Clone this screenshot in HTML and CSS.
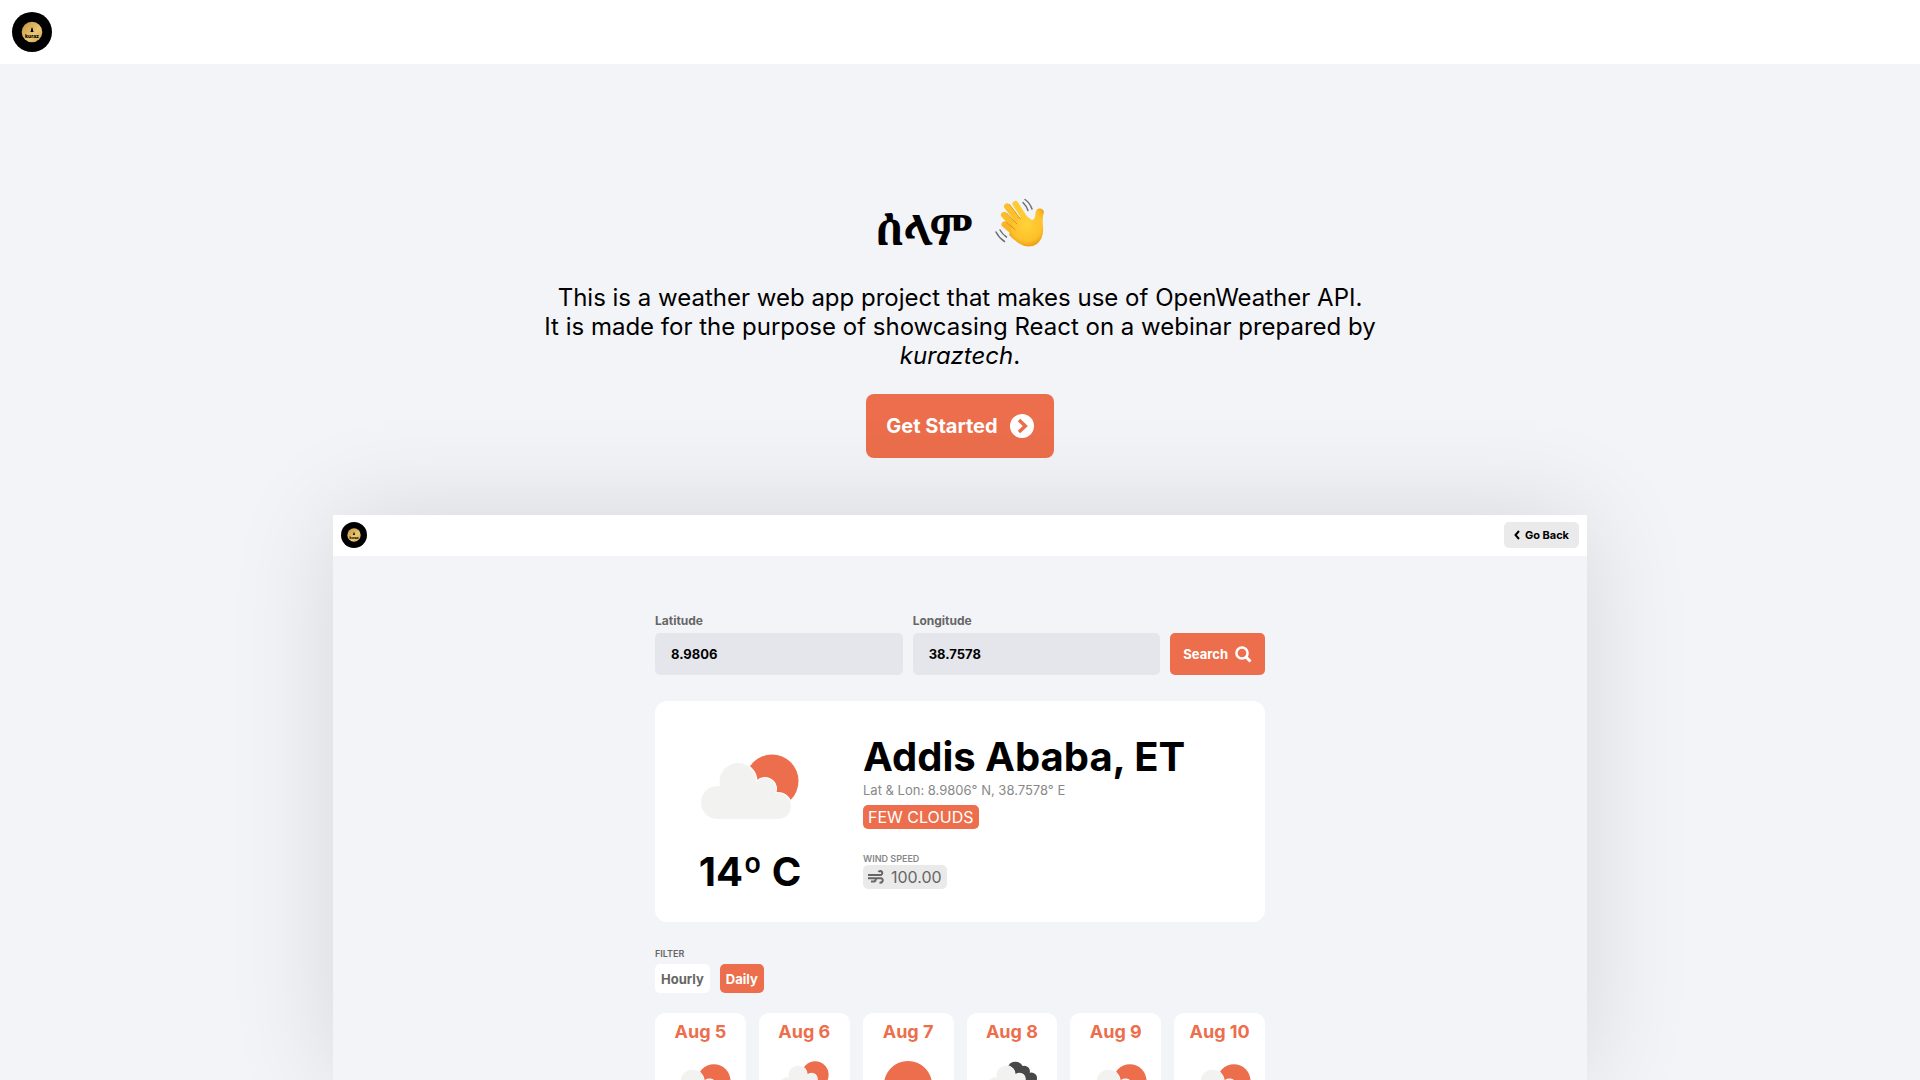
FILE: index.html
```html
<!DOCTYPE html>
<html lang="en">
<head>
<meta charset="utf-8">
<meta name="viewport" content="width=device-width, initial-scale=1">
<title>Kuraz Weather</title>
<link rel="stylesheet" href="styles.css">
</head>
<body>
<svg class="defs" aria-hidden="true">
  <defs>
    <linearGradient id="gold" x1="0" y1="0" x2="1" y2="1">
      <stop offset="0" stop-color="#c3923d"/>
      <stop offset=".6" stop-color="#e9c873"/>
      <stop offset="1" stop-color="#d0a04a"/>
    </linearGradient>
    <radialGradient id="skin" cx=".5" cy=".4" r=".65">
      <stop offset="0" stop-color="#ffd33c"/>
      <stop offset=".7" stop-color="#fdc02a"/>
      <stop offset="1" stop-color="#e8940f"/>
    </radialGradient>
    <symbol id="logo" viewBox="0 0 40 40">
      <circle cx="20" cy="20" r="20" fill="#000"/>
      <circle cx="20" cy="20" r="10.300" fill="url(#gold)"/>
      <path d="M20 15l1 2.500v1.500l1 1H18l1-1v-1.500z" fill="#000"/>
      <text x="20" y="25.500" text-anchor="middle" class="logo-word">kuraz</text>
    </symbol>
    <g id="cloud-shape">
      <circle cx="16.500" cy="48.500" r="16.500"/>
      <circle cx="37" cy="27.500" r="18.500"/>
      <circle cx="64" cy="35" r="11"/>
      <circle cx="77" cy="52" r="13"/>
      <path d="M16 40L37 30H56L70 40L77 50V65H16z"/>
    </g>
    <symbol id="few-clouds" viewBox="0 0 98 65">
      <circle cx="71" cy="27" r="26.500" fill="#ec6e4c"/>
      <use href="#cloud-shape" fill="#fff" stroke="#fff" stroke-width="2"/>
      <use href="#cloud-shape" fill="#f2f2f0"/>
    </symbol>
    <symbol id="broken-clouds" viewBox="0 0 98 65">
      <path d="M40 20A16 16 0 0 1 70 10A11 11 0 0 1 84 23A11 11 0 0 1 98 36Q98 55 84 55H50z" fill="#484848"/>
      <use href="#cloud-shape" fill="#fff" stroke="#fff" stroke-width="2"/>
      <use href="#cloud-shape" fill="#f2f2f0"/>
    </symbol>
  </defs>
</svg>

<header class="topbar">
  <a href="#" class="logo-link" aria-label="Kuraz home"><svg class="logo"><use href="#logo"/></svg></a>
</header>

<main class="hero">
  <h1 class="greeting"><span lang="am">ሰላም</span>
    <svg class="wave" viewBox="0 0 50 50" role="img" aria-label="Waving hand">
      <g fill="none" stroke-linecap="round">
        <path d="M12 8.500L27 28" stroke="#fcc02b" stroke-width="6"/>
        <path d="M20.500 6L34 27" stroke="#ffca32" stroke-width="6"/>
        <path d="M9 17L24 33" stroke="#fbbd28" stroke-width="6"/>
        <path d="M9.500 26.500L22 37" stroke="#f9b525" stroke-width="6"/>
      </g>
      <path d="M18 24L30 17L37 22Q40 22 40.500 15Q41 11 44 10.500Q48 10 49 14Q47 19 48 29Q49 40 42 46Q34 51 25 46Q20 43 14 37z" fill="url(#skin)"/>
      <g fill="none" stroke="#dd930f" stroke-width="1" stroke-linecap="round">
        <path d="M14.500 6.500L25.500 21"/><path d="M11.500 15L22 26"/><path d="M11 24L20 31.500"/>
      </g>
      <g fill="none" stroke="#6d7073" stroke-width="1.500" stroke-linecap="round">
        <path d="M30 1.500Q35 5 37 11"/><path d="M28 4.500Q31.500 8 33 12.500"/>
        <path d="M1 34Q4 40 9.500 43.500"/><path d="M5 32Q7.500 36.500 11.500 39"/>
      </g>
    </svg>
  </h1>
  <p class="intro">This is a weather web app project that makes use of OpenWeather API.<br>It is made for the purpose of showcasing React on a webinar prepared by <em>kuraztech</em>.</p>
  <button type="button" class="btn start">Get Started
    <svg class="start-icon" viewBox="0 0 24 24"><circle cx="12" cy="12" r="12" fill="#fff"/><path d="M9 6L15.300 12L9 18" fill="none" stroke="#ec6e4c" stroke-width="3.500"/></svg>
  </button>

  <section class="preview" aria-label="App preview">
    <header class="preview-bar">
      <a href="#" class="logo-link" aria-label="Kuraz home"><svg class="logo small"><use href="#logo"/></svg></a>
      <button type="button" class="back"><svg class="back-icon" viewBox="0 0 6 10"><path d="M5 1L1.500 5L5 9" fill="none" stroke="#000" stroke-width="2"/></svg>Go Back</button>
    </header>
    <div class="panel">
      <form class="search">
        <div class="field"><label for="lat">Latitude</label><input id="lat" type="text" value="8.9806"></div>
        <div class="field"><label for="lon">Longitude</label><input id="lon" type="text" value="38.7578"></div>
        <button type="button" class="btn find">Search
          <svg class="find-icon" viewBox="0 0 17 17"><circle cx="7" cy="7" r="5.600" fill="none" stroke="#fff" stroke-width="2.500"/><path d="M11 11L15.500 15.500" stroke="#fff" stroke-width="3"/></svg>
        </button>
      </form>

      <article class="current">
        <div class="reading">
          <svg class="sky"><use href="#few-clouds"/></svg>
          <p class="big">14º C</p>
        </div>
        <div class="place">
          <h2 class="big">Addis Ababa, ET</h2>
          <p class="coords">Lat &amp; Lon: 8.9806° N, 38.7578° E</p>
          <p class="chip status">FEW CLOUDS</p>
          <p class="caption">WIND SPEED</p>
          <p class="chip wind"><svg class="wind-icon" viewBox="0 0 17 14"><g fill="none" stroke="#666" stroke-width="2"><path d="M0 5H12.500A2 2 0 1 0 10.500 2"/><path d="M0 8.300H13.500A2.200 2.200 0 1 1 11.500 12.300"/><path d="M3 11.500H5.500A2 2 0 0 0 7.500 8.500"/></g></svg>100.00</p>
        </div>
      </article>

      <p class="caption dark">FILTER</p>
      <div class="filters">
        <button type="button" class="filter">Hourly</button>
        <button type="button" class="filter active">Daily</button>
      </div>

      <ul class="days">
        <li><h3>Aug 5</h3><svg class="day-icon large"><use href="#few-clouds"/></svg></li>
        <li><h3>Aug 6</h3><svg class="day-icon"><use href="#few-clouds"/></svg></li>
        <li><h3>Aug 7</h3><svg class="day-icon sun" viewBox="0 0 48 48"><circle cx="24" cy="24" r="24" fill="#ec6e4c"/></svg></li>
        <li><h3>Aug 8</h3><svg class="day-icon"><use href="#broken-clouds"/></svg></li>
        <li><h3>Aug 9</h3><svg class="day-icon large"><use href="#few-clouds"/></svg></li>
        <li><h3>Aug 10</h3><svg class="day-icon large"><use href="#few-clouds"/></svg></li>
      </ul>
    </div>
  </section>
</main>
</body>
</html>
```
FILE: styles.css
```css
* { box-sizing: border-box; }

body {
  margin: 0;
  height: 100vh;
  overflow: hidden;
  display: flex;
  flex-direction: column;
  background: #f3f4f8;
  color: #000;
  font-family: Inter, "Liberation Sans", sans-serif;
}

h1, h2, h3, p, ul { margin: 0; padding: 0; }
button, input { border: 0; font-family: inherit; }
svg { display: block; flex: none; }
.defs { position: absolute; width: 0; height: 0; }

.topbar {
  flex: none;
  height: 64px;
  padding: 12px;
  background: #fff;
}
.logo-link { display: inline-block; }
.logo { width: 40px; height: 40px; }
.logo.small { width: 26px; height: 26px; }
.logo-word { font: 800 5px Inter, sans-serif; }

.hero {
  flex: 1;
  min-height: 0;
  display: flex;
  flex-direction: column;
  align-items: center;
  padding-top: 134px;
}
.greeting {
  display: flex;
  align-items: center;
  gap: 22px;
  height: 64px;
  font-family: Inter, "Noto Serif Ethiopic", "Noto Sans Ethiopic", "Abyssinica SIL", serif;
  font-size: 42px;
  line-height: 64px;
}
.wave { width: 50px; height: 50px; margin-bottom: 14px; }
.intro {
  width: 100%;
  max-width: 860px;
  margin: 21px 0 24px;
  text-align: center;
  font-size: 24px;
  line-height: 29px;
}

.btn {
  display: flex;
  align-items: center;
  color: #fff;
  background: #ec6e4c;
  font-weight: 700;
}
.start {
  flex: none;
  height: 64px;
  padding: 0 20px;
  gap: 12px;
  border-radius: 8px;
  font-size: 20px;
}
.start-icon { width: 24px; height: 24px; }

.preview {
  flex: 1;
  min-height: 0;
  width: 100%;
  max-width: 1254px;
  margin-top: 57px;
  background: #f3f4f8;
  box-shadow: 0 0 100px rgba(0, 0, 0, .12);
}
.preview-bar {
  display: flex;
  justify-content: space-between;
  align-items: flex-start;
  height: 41px;
  padding: 7px 8px;
  background: #fff;
}
.back {
  display: flex;
  align-items: center;
  gap: 5px;
  height: 26px;
  padding: 0 10px;
  border-radius: 5px;
  background: #eaeaea;
  color: #000;
  font-size: 11px;
  font-weight: 700;
}
.back-icon { width: 6px; height: 10px; }

.panel {
  width: 100%;
  max-width: 610px;
  margin: 0 auto;
  padding-top: 56px;
}
.search {
  display: flex;
  align-items: flex-end;
  gap: 10px;
}
.field {
  flex: 1;
  min-width: 0;
  display: flex;
  flex-direction: column;
  gap: 4px;
}
.field label {
  color: #666;
  font-size: 12px;
  line-height: 17px;
  font-weight: 700;
}
.field input {
  width: 100%;
  height: 42px;
  padding: 0 16px;
  border-radius: 5px;
  background: #e5e6eb;
  color: #000;
  font-size: 13px;
  font-weight: 700;
}
.find {
  height: 42px;
  padding: 0 13px;
  gap: 7px;
  border-radius: 5px;
  font-size: 13px;
}
.find-icon { width: 17px; height: 17px; }

.current {
  display: flex;
  height: 221px;
  margin: 26px 0;
  border-radius: 12px;
  background: #fff;
}
.reading {
  width: 208px;
  padding: 53px 18px 0 0;
  display: flex;
  flex-direction: column;
  align-items: center;
}
.sky { width: 98px; height: 65px; }
.big {
  font-size: 40px;
  line-height: 50px;
  font-weight: 700;
}
.reading .big { margin-top: 28px; }
.place {
  display: flex;
  flex-direction: column;
  align-items: flex-start;
  padding-top: 31px;
}
.coords {
  color: #888;
  font-size: 13px;
  line-height: 16px;
}
.chip {
  display: flex;
  align-items: center;
  height: 24px;
  padding: 0 5px;
  border-radius: 5px;
  font-size: 16px;
}
.status {
  margin: 7px 0 24px;
  background: #ec6e4c;
  color: #fff;
}
.wind { gap: 6px; background: #eaeaea; color: #666; }
.wind-icon { width: 17px; height: 14px; }
.caption {
  color: #888;
  font-size: 9px;
  line-height: 12px;
  font-weight: 600;
}
.caption.dark { color: #666; }

.filters {
  display: flex;
  gap: 10px;
  margin: 4px 0 20px;
}
.filter {
  height: 29px;
  padding: 0 6px;
  border-radius: 5px;
  background: #fff;
  color: #666;
  font-size: 13px;
  font-weight: 700;
}
.filter.active { background: #ec6e4c; color: #fff; }

.days {
  display: grid;
  grid-template-columns: repeat(6, 1fr);
  gap: 13px;
  list-style: none;
}
.days li {
  height: 160px;
  padding-top: 8px;
  border-radius: 10px;
  background: #fff;
  display: flex;
  flex-direction: column;
  align-items: center;
}
.days h3 {
  color: #ec6e4c;
  font-size: 18px;
  line-height: 22px;
  font-weight: 700;
}
.day-icon { width: 50px; height: 33px; margin-top: 18px; }
.day-icon.large { width: 62px; height: 41px; margin-top: 21px; }
.day-icon.sun { width: 48px; height: 48px; }
```
